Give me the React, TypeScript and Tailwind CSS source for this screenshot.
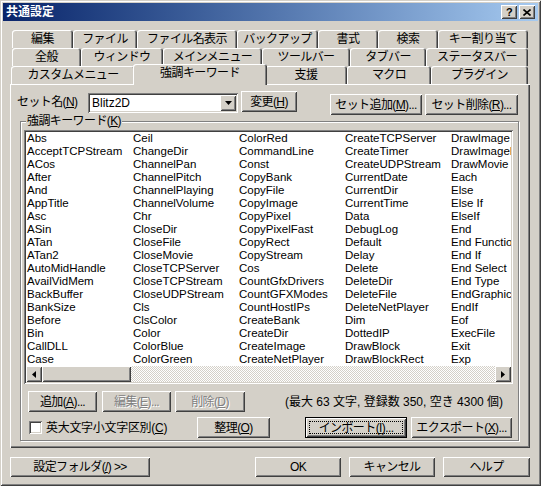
import React from "react";

const FONT = "font-['Liberation_Sans','Noto_Sans_CJK_JP',sans-serif]";
const RAISED =
  "shadow-[inset_1px_1px_#ffffff,inset_-1px_-1px_#404040,inset_2px_2px_#d4d0c8,inset_-2px_-2px_#808080]";
const SUNKEN =
  "shadow-[inset_1px_1px_#808080,inset_-1px_-1px_#ffffff,inset_2px_2px_#404040,inset_-2px_-2px_#d4d0c8]";
const TAB =
  "shadow-[inset_1px_1px_#ffffff,inset_-1px_0_#404040,inset_-2px_0_#808080] rounded-t-[3px]";

function Btn({
  w,
  h = "h-[21px]",
  extra = "",
  disabled = false,
  children,
}: {
  w: string;
  h?: string;
  extra?: string;
  disabled?: boolean;
  children: React.ReactNode;
}) {
  return (
    <div
      className={`${w} ${h} ${extra} ${RAISED} bg-[#d4d0c8] flex items-center justify-center shrink-0 text-[12px] whitespace-nowrap ${
        disabled ? "text-[#808080] [text-shadow:1px_1px_0_#ffffff]" : "text-black"
      }`}
    >
      {children}
    </div>
  );
}

function Tab({ w, label }: { w: string; label: string }) {
  return (
    <div className={`${w} h-full ${TAB} bg-[#d4d0c8] flex items-center justify-center shrink-0 text-[12px]`}>
      {label}
    </div>
  );
}

function TriDown() {
  return (
    <svg width="7" height="4" viewBox="0 0 7 4">
      <polygon points="0,0 7,0 3.5,4" fill="#000" />
    </svg>
  );
}
function TriLeft() {
  return (
    <svg width="4" height="7" viewBox="0 0 4 7">
      <polygon points="4,0 4,7 0,3.5" fill="#000" />
    </svg>
  );
}
function TriRight() {
  return (
    <svg width="4" height="7" viewBox="0 0 4 7">
      <polygon points="0,0 0,7 4,3.5" fill="#000" />
    </svg>
  );
}

const WORDS = [
  "Abs", "AcceptTCPStream", "ACos", "After", "And", "AppTitle", "Asc", "ASin", "ATan", "ATan2",
  "AutoMidHandle", "AvailVidMem", "BackBuffer", "BankSize", "Before", "Bin", "CallDLL", "Case",
  "Ceil", "ChangeDir", "ChannelPan", "ChannelPitch", "ChannelPlaying", "ChannelVolume", "Chr",
  "CloseDir", "CloseFile", "CloseMovie", "CloseTCPServer", "CloseTCPStream", "CloseUDPStream",
  "Cls", "ClsColor", "Color", "ColorBlue", "ColorGreen",
  "ColorRed", "CommandLine", "Const", "CopyBank", "CopyFile", "CopyImage", "CopyPixel",
  "CopyPixelFast", "CopyRect", "CopyStream", "Cos", "CountGfxDrivers", "CountGFXModes",
  "CountHostIPs", "CreateBank", "CreateDir", "CreateImage", "CreateNetPlayer",
  "CreateTCPServer", "CreateTimer", "CreateUDPStream", "CurrentDate", "CurrentDir", "CurrentTime",
  "Data", "DebugLog", "Default", "Delay", "Delete", "DeleteDir", "DeleteFile", "DeleteNetPlayer",
  "Dim", "DottedIP", "DrawBlock", "DrawBlockRect",
  "DrawImage", "DrawImageRect", "DrawMovie", "Each", "Else", "Else If", "ElseIf", "End",
  "End Function", "End If", "End Select", "End Type", "EndGraphics", "EndIf", "Eof", "ExecFile",
  "Exit", "Exp",
];

export default function App() {
  return (
    <div
      className={`w-[541px] h-[486px] bg-[#d4d0c8] p-[3px] flex flex-col shadow-[inset_1px_1px_#d4d0c8,inset_-1px_-1px_#404040,inset_2px_2px_#ffffff,inset_-2px_-2px_#808080] ${FONT} text-[12px] leading-none text-black tracking-[-0.6px]`}
    >
      {/* Title bar */}
      <div className="h-[18px] shrink-0 bg-linear-to-r from-[#0a246a] to-[#a6caf0] flex items-center pl-[3px] pr-[3px]">
        <span className="text-white font-bold text-[12px] tracking-normal">共通設定</span>
        <div className="ml-auto flex items-center gap-[2px]">
          <div className={`w-[16px] h-[14px] bg-[#d4d0c8] ${RAISED} flex items-center justify-center text-[11px] font-bold`}>
            ?
          </div>
          <div className={`w-[16px] h-[14px] bg-[#d4d0c8] ${RAISED} flex items-center justify-center`}>
            <svg width="8" height="7" viewBox="0 0 8 7">
              <path d="M0.5 0.5 L7.5 6.5 M7.5 0.5 L0.5 6.5" stroke="#000" strokeWidth="1.6" />
            </svg>
          </div>
        </div>
      </div>

      {/* Tabs + panel */}
      <div className="mt-[9px] ml-[7px] flex flex-col">
        <div className="flex h-[18px] ml-[2px]">
          <Tab w="w-[61px]" label="編集" />
          <Tab w="w-[64px]" label="ファイル" />
          <Tab w="w-[100px]" label="ファイル名表示" />
          <Tab w="w-[81px]" label="バックアップ" />
          <Tab w="w-[60px]" label="書式" />
          <Tab w="w-[60px]" label="検索" />
          <Tab w="w-[90px]" label="キー割り当て" />
        </div>
        <div className="flex h-[18px] ml-[2px]">
          <Tab w="w-[69px]" label="全般" />
          <Tab w="w-[82px]" label="ウィンドウ" />
          <Tab w="w-[99px]" label="メインメニュー" />
          <Tab w="w-[88px]" label="ツールバー" />
          <Tab w="w-[76px]" label="タブバー" />
          <Tab w="w-[102px]" label="ステータスバー" />
        </div>
        <div className="flex h-[18px] ml-[1px]">
          <Tab w="w-[124px]" label="カスタムメニュー" />
          <div
            className={`relative z-10 -ml-[2px] -mr-[2px] -mt-[2px] w-[134px] h-[21px] ${TAB} bg-[#d4d0c8] flex items-center justify-center pb-[3px] shrink-0 text-[12px]`}
          >
            強調キーワード
          </div>
          <Tab w="w-[82px]" label="支援" />
          <Tab w="w-[84px]" label="マクロ" />
          <Tab w="w-[97px]" label="プラグイン" />
        </div>

        {/* Panel */}
        <div className="w-[520px] h-[364px] bg-[#d4d0c8] pt-[7px] flex flex-col shadow-[inset_1px_1px_#ffffff,inset_-1px_-1px_#404040,inset_-2px_-2px_#808080]">
          <div className="flex h-[24px] items-start">
            <div className="ml-[7px] w-[71px] h-[20px] mt-[1px] flex items-center">
              セット名(<u>N</u>)
            </div>
            <div className={`mt-[2px] w-[150px] h-[20px] bg-white ${SUNKEN} p-[2px] flex`}>
              <div className="flex-1 flex items-center pl-[2px] tracking-normal">Blitz2D</div>
              <div className={`w-[16px] h-full bg-[#d4d0c8] ${RAISED} flex items-center justify-center`}>
                <TriDown />
              </div>
            </div>
            <Btn w="w-[56px]" extra="ml-[3px]">
              変更(<u>H</u>)
            </Btn>
            <Btn w="w-[92px]" extra="ml-[33px] mt-[3px]">
              セット追加(<u>M</u>)...
            </Btn>
            <Btn w="w-[93px]" extra="ml-[3px] mt-[3px]">
              セット削除(<u>R</u>)...
            </Btn>
          </div>

          {/* Group box */}
          <div className="relative ml-[10px] mt-[6px] w-[499px] h-[320px] border border-[#808080] shadow-[inset_1px_1px_#ffffff,1px_1px_#ffffff] pl-[3px] pt-[8px] flex flex-col">
            <div className="absolute left-[5px] top-[-8px] bg-[#d4d0c8] px-[1px] h-[14px] flex items-center">
              強調キーワード(<u>K</u>)
            </div>

            {/* List box */}
            <div className={`w-[489px] h-[254px] bg-white ${SUNKEN} p-[2px] flex flex-col`}>
              <div className="h-[234px] overflow-hidden pl-[1px]">
                <div className="grid grid-flow-col grid-rows-[repeat(18,13px)] auto-cols-[106px] text-[11.5px] tracking-normal">
                  {WORDS.map((w, i) => (
                    <div key={i} className="h-[13px] flex items-center whitespace-nowrap">
                      {w}
                    </div>
                  ))}
                </div>
              </div>
              <div className="h-[16px] flex">
                <div className={`w-[16px] h-full bg-[#d4d0c8] ${RAISED} flex items-center justify-center`}>
                  <TriLeft />
                </div>
                <div className={`w-[89px] h-full bg-[#d4d0c8] ${RAISED}`} />
                <div className="flex-1 h-full bg-[repeating-conic-gradient(#d4d0c8_0%_25%,#ffffff_0%_50%)] bg-[length:2px_2px]" />
                <div className={`w-[16px] h-full bg-[#d4d0c8] ${RAISED} flex items-center justify-center`}>
                  <TriRight />
                </div>
              </div>
            </div>

            <div className="mt-[7px] flex h-[21px] items-center">
              <Btn w="w-[69px]" extra="ml-[4px]">
                追加(<u>A</u>)...
              </Btn>
              <Btn w="w-[69px]" extra="ml-[5px]" disabled>
                編集(<u>E</u>)...
              </Btn>
              <Btn w="w-[70px]" extra="ml-[4px]" disabled>
                削除(<u>D</u>)
              </Btn>
              <div className="ml-[40px] whitespace-nowrap tracking-normal">(最大 63 文字, 登録数 350, 空き 4300 個)</div>
            </div>

            <div className="mt-[5px] flex h-[21px] items-center">
              <div className={`ml-[5px] w-[13px] h-[13px] bg-white ${SUNKEN} shrink-0`} />
              <div className="ml-[4px] w-[151px] whitespace-nowrap tracking-[-0.3px]">
                英大文字小文字区別(<u>C</u>)
              </div>
              <Btn w="w-[73px]">
                整理(<u>O</u>)
              </Btn>
              <div className="relative ml-[35px] w-[102px] h-[21px] border border-black shrink-0">
                <div className={`w-full h-full bg-[#d4d0c8] ${RAISED} flex items-center justify-center whitespace-nowrap`}>
                  インポート(<u>I</u>)...
                </div>
                <div className="absolute inset-[3px] border border-dotted border-black pointer-events-none" />
              </div>
              <Btn w="w-[101px]" extra="ml-[4px]">
                エクスポート(<u>X</u>)...
              </Btn>
            </div>
          </div>
        </div>
      </div>

      {/* Bottom buttons */}
      <div className="mt-[9px] ml-[7px] flex h-[20px]">
        <Btn w="w-[140px]" h="h-[20px]">
          設定フォルダ(<u>/</u>) &gt;&gt;
        </Btn>
        <Btn w="w-[86px]" h="h-[20px]" extra="ml-[105px]">
          OK
        </Btn>
        <Btn w="w-[86px]" h="h-[20px]" extra="ml-[8px]">
          キャンセル
        </Btn>
        <Btn w="w-[87px]" h="h-[20px]" extra="ml-[8px]">
          ヘルプ
        </Btn>
      </div>
    </div>
  );
}
